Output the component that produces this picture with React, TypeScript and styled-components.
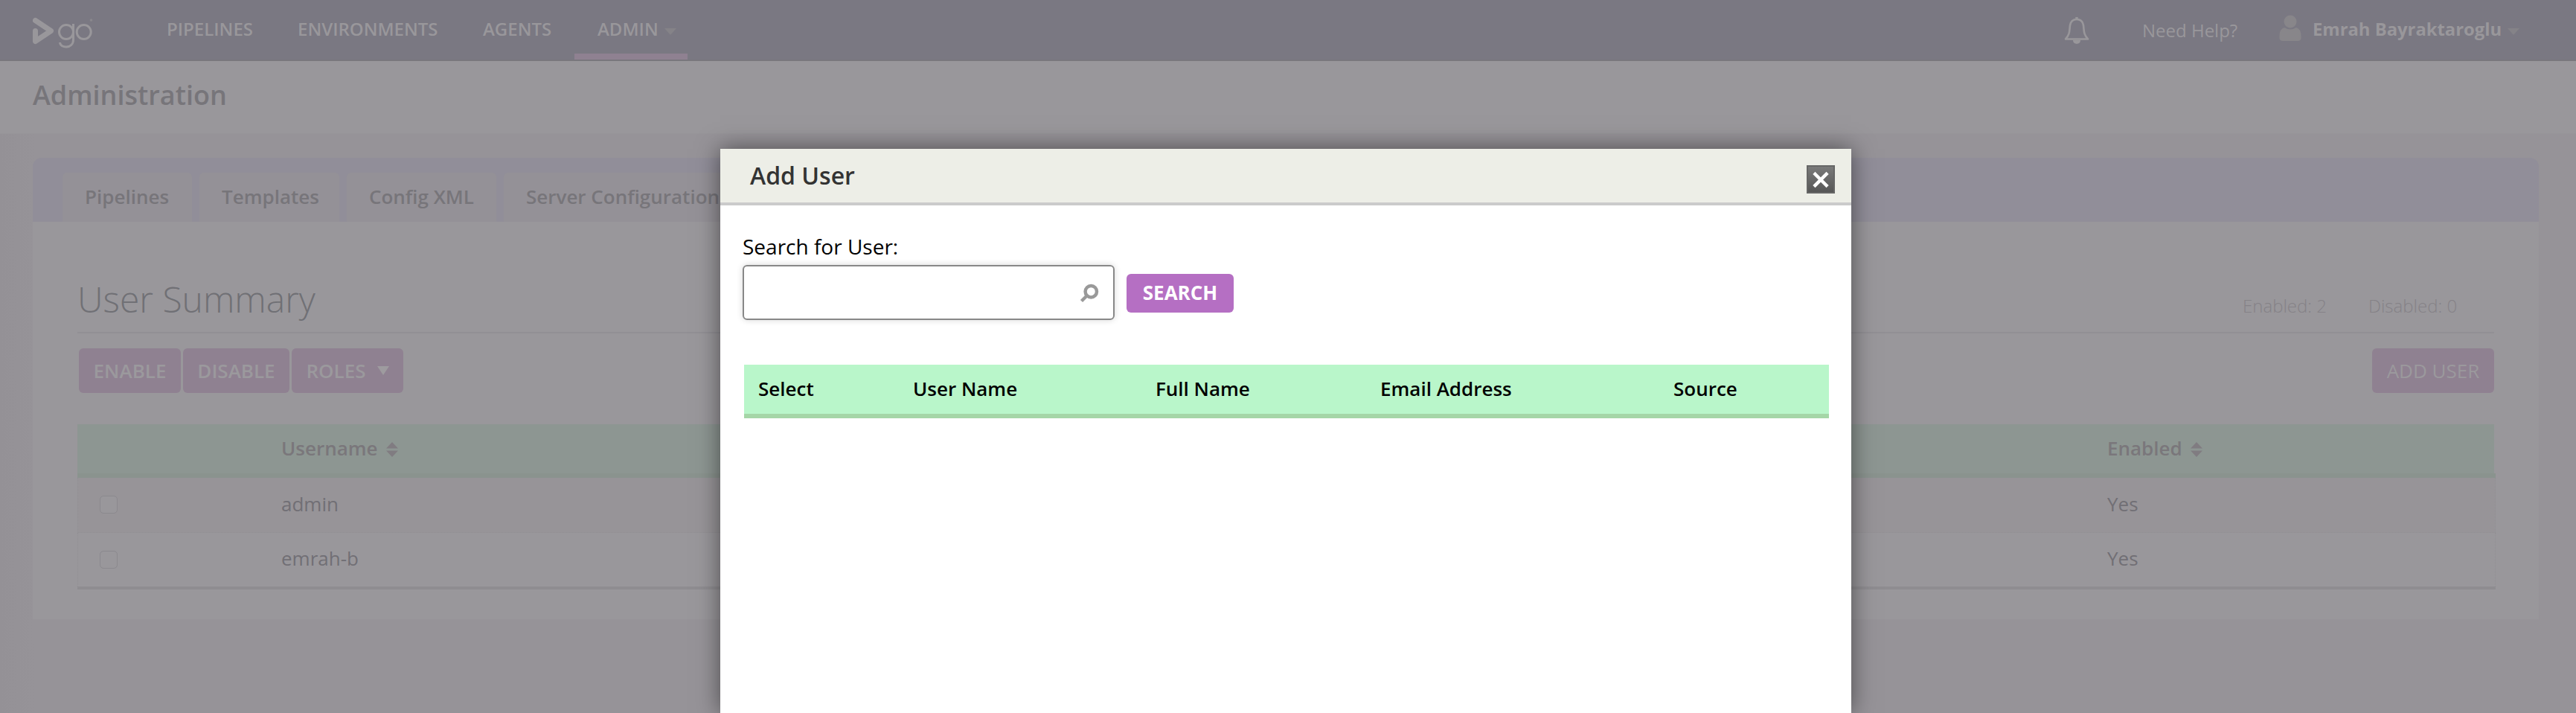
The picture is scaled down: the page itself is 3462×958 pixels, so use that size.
import React from "react";
import styled, { createGlobalStyle } from "styled-components";

const Global = createGlobalStyle`
  * { box-sizing: border-box; }
  body { margin: 0; height: 958px; overflow: hidden; background: #969398; font-family: "Open Sans", "Noto Sans", sans-serif; color: #716f75; }
`;

const Page = styled.div`height: 958px; overflow: hidden; background: linear-gradient(90deg, #949196 0, #969398 46px);`;
const Header = styled.header`
  height: 82px; display: flex; align-items: flex-start; padding-left: 44px; padding-right: 76px;
  background: #7a7882; border-bottom: 2px solid #79777d; color: #99979b;
`;
const Logo = styled.svg`width: 84px; height: 46px; margin-top: 22px; flex: none;`;
const Nav = styled.nav`display: flex; margin-left: 65px; flex: 1;`;
const NavItem = styled.a<{ $w: number; $active?: boolean }>`
  width: ${p => p.$w}px; height: 80px; padding-left: 31px; display: flex; white-space: nowrap;
  font-size: 24px; font-weight: 600; line-height: 78px;
  border-bottom: ${p => (p.$active ? "8px solid #8f8191" : "0")};
`;
const Label = styled.span<{ $w: number }>`width: ${p => p.$w}px; flex: none; white-space: nowrap;`;
const Caret = styled.svg`width: 16px; height: 9px; margin-top: 38px; fill: #858388;`;
const Bell = styled.svg`width: 34px; height: 37px; margin-top: 22px; fill: none; stroke: #99979b;`;
const Help = styled.a`margin-left: 71px; font-size: 24px; line-height: 82px; width: 130px; white-space: nowrap;`;
const Person = styled.svg`width: 30px; height: 36px; margin: 20px 0 0 54px; fill: #88868a;`;
const User = styled.a`margin-left: 15px; width: 262px; font-size: 23.8px; font-weight: 700; line-height: 78px; white-space: nowrap;`;

const TitleBar = styled.div`height: 98px; padding-left: 44px; background: #99979b; border-bottom: 1px solid #979599;
  h1 { margin: 0; font-size: 36px; font-weight: 600; line-height: 92px; color: #77757a; }
`;
const Tabs = styled.div`
  height: 86px; margin: 32px 50px 0 44px; padding: 20px 0 0 40px; display: flex; gap: 10px;
  background: #918e99; border-radius: 12px 12px 0 0;
`;
const Tab = styled.a<{ $w: number }>`
  width: ${p => p.$w}px; padding-left: 30px; background: #949197; border-radius: 6px 6px 0 0; height: 66px;
  font-size: 26px; font-weight: 600; line-height: 64px; color: #77757a; white-space: nowrap;
`;
const Panel = styled.main`height: 534px; margin: 0 50px 0 44px; padding: 60px 60px 0; background: #99979b;`;
const Heading = styled.div`
  height: 90px; display: flex; justify-content: space-between; border-bottom: 2px solid #918f94;
  h2 { margin: 0; font-size: 48px; font-weight: 300; line-height: 87px; color: #707075; }
`;
const Counts = styled.div`display: flex; padding-right: 51px; font-size: 24px; font-weight: 300; line-height: 106px; color: #858287; white-space: nowrap;`;
const Actions = styled.div`display: flex; padding: 20px 0 0 2px; gap: 3px; height: 122px; & > :last-child { margin-left: auto; }`;
const Button = styled.button<{ $w: number; $light?: boolean }>`
  width: ${p => p.$w}px; height: 60px; border: 0; border-radius: 6px; background: #8f8191; color: #9b999d; padding: 0;
  display: flex; align-items: center; justify-content: center; gap: 15px;
  font: ${p => (p.$light ? 400 : 600)} 26px "Open Sans", sans-serif; white-space: nowrap;
`;
const Triangle = styled.svg`width: 16px; height: 12px; fill: #9e9b9f;`;
const Grid = styled.div`width: 3250px;`;
const HeadRow = styled.div`
  display: flex; height: 72px; padding-left: 274px;
  background: linear-gradient(#8d9692, #8d9692) 0 0 / 3248px 66px no-repeat, linear-gradient(#8a938e, #8a938e) 0 66px / 100% 6px no-repeat;
  font-size: 26px; font-weight: 600; color: #7a777b;
`;
const Cell = styled.div<{ $w: number }>`width: ${p => p.$w}px; display: flex; align-items: center; gap: 11px; height: 66px; padding-bottom: 2px;`;
const Sort = styled.svg`width: 16px; height: 22px; margin-top: 3px; fill: #807c81;`;
const Row = styled.div<{ $alt?: boolean }>`
  display: flex; height: ${p => (p.$alt ? 74 : 72)}px; padding: 0 0 2px 29px; align-items: center; font-size: 26px; color: #716f75;
  background: ${p => (p.$alt ? "#979498" : "#99979b")};
  border: 1px dotted #918f93; border-width: 0 1px ${p => (p.$alt ? "1px" : "0")};
`;
const Check = styled.span`width: 24px; height: 24px; border: 1px solid #8b898e; border-radius: 5px; background: #99979b; margin-top: 3px;`;
const Foot = styled.div`height: 4px; background: #8f8d91;`;

const Modal = styled.section`
  position: absolute; left: 968px; top: 200px; width: 1520px; height: 758px; background: #fff; color: #000;
  box-shadow: 0 0 30px rgba(0,0,0,.5);
`;
const ModalHead = styled.div`
  height: 76px; padding: 0 22px 0 40px; display: flex; justify-content: space-between; align-items: flex-start;
  background: #edeee7; border-bottom: 4px solid #cbcbcb;
  h3 { margin: 0; font-size: 32px; font-weight: 600; line-height: 72px; color: #333; }
`;
const Close = styled.svg`width: 38px; height: 38px; margin-top: 22px;`;
const ModalBody = styled.div`padding: 37px 30px 0;`;
const FieldLabel = styled.label`display: block; height: 43px; font-size: 28px; line-height: 36px;`;
const SearchRow = styled.div`display: flex; align-items: center; gap: 16px; height: 74px;`;
const Field = styled.div`
  width: 500px; height: 74px; border: 2px solid #888; border-radius: 6px; box-shadow: 0 0 8px rgba(0,0,0,.16);
  display: flex; align-items: center; justify-content: flex-end; padding-right: 18px;
`;
const Magnifier = styled.svg`width: 28px; height: 28px; fill: none; stroke: #999; stroke-width: 4.5;`;
const SearchButton = styled.button`
  width: 144px; height: 52px; margin-top: 2px; border: 0; border-radius: 6px; background: #b56fc3; color: #fff; padding: 0 0 2px;
  font: 700 26px "Open Sans", sans-serif;
`;
const Results = styled.div`
  display: flex; margin: 60px 0 0 2px; width: 1458px; height: 72px; padding-left: 19px;
  background: #b9f6ca; border-bottom: 6px solid #a5d6a7; font-size: 26px; font-weight: 600; line-height: 64px;
`;

const SortIcon = () => <Sort viewBox="0 0 16 22"><path d="M8 1l8 8.500H0zM8 21l8-8.500H0z" /></Sort>;

export default function App() {
  return (
    <>
      <Global />
      <Page>
        <Header>
          <Logo viewBox="0 0 84 46">
            <path d="M3.500 5.500L24.500 19.500L3.500 33.500V19.500" fill="none" stroke="#99979b" strokeWidth="7" strokeLinecap="round" strokeLinejoin="round" />
            <g fill="none" stroke="#99979b" strokeWidth="3">
              <circle cx="45" cy="21" r="9.500" />
              <path d="M54.500 10V31.500C54.500 43.500 37 43.500 36.500 35" />
              <circle cx="68.700" cy="21" r="9.500" />
            </g>
            <circle cx="78.500" cy="5" r="1.800" fill="#8a888d" />
          </Logo>
          <Nav>
            <NavItem $w={176}><Label $w={116}>PIPELINES</Label></NavItem>
            <NavItem $w={249}><Label $w={188}>ENVIRONMENTS</Label></NavItem>
            <NavItem $w={154}><Label $w={93}>AGENTS</Label></NavItem>
            <NavItem $w={152} $active><Label $w={90}>ADMIN</Label><Caret viewBox="0 0 16 9"><path d="M0 0H16L8 9z" /></Caret></NavItem>
          </Nav>
          <Bell viewBox="0 0 34 37">
            <path d="M2 30.500C8 24 7 20 8 12C9 6 13 4 17 4C21 4 25 6 26 12C27 20 26 24 32 30.500Z" strokeWidth="2.600" strokeLinejoin="round" />
            <path d="M17 1V4" strokeWidth="3.500" />
            <path d="M12 32H22C22 38.500 12 38.500 12 32Z" fill="#99979b" stroke="none" />
          </Bell>
          <Help>Need Help?</Help>
          <Person viewBox="0 0 30 36"><circle cx="15" cy="9" r="8.500" /><path d="M7 17Q15 22 23 17Q29.500 19 29.500 28V31Q29.500 35 25 35H5Q.5 35 .5 31V28Q.5 19 7 17Z" /></Person>
          <User>Emrah Bayraktaroglu</User>
          <Caret viewBox="0 0 16 9"><path d="M0 0H16L8 9z" /></Caret>
        </Header>
        <TitleBar><h1>Administration</h1></TitleBar>
        <Tabs>
          <Tab $w={174}>Pipelines</Tab><Tab $w={188}>Templates</Tab><Tab $w={201}>Config XML</Tab><Tab $w={350}>Server Configuration</Tab>
        </Tabs>
        <Panel>
          <Heading><h2>User Summary</h2><Counts><Label $w={169}>Enabled: 2</Label><Label $w={118}>Disabled: 0</Label></Counts></Heading>
          <Actions>
            <Button $w={137}>ENABLE</Button><Button $w={143}>DISABLE</Button>
            <Button $w={150}>ROLES<Triangle viewBox="0 0 16 12"><path d="M0 0H16L8 12z" /></Triangle></Button>
            <Button $w={164} $light>ADD USER</Button>
          </Actions>
          <Grid>
            <HeadRow><Cell $w={2454}>Username<SortIcon /></Cell><Cell $w={400}>Enabled<SortIcon /></Cell></HeadRow>
            {["admin", "emrah-b"].map((name, i) => (
              <Row key={name} $alt={i === 0}>
                <Cell $w={244}><Check /></Cell><Cell $w={2454}>{name}</Cell><Cell $w={200}>Yes</Cell>
              </Row>
            ))}
            <Foot />
          </Grid>
        </Panel>
      </Page>
      <Modal>
        <ModalHead>
          <h3>Add User</h3>
          <Close viewBox="0 0 38 38">
            <defs><linearGradient id="closeFill" x2="0" y2="1"><stop stopColor="#7b7b7b" /><stop offset="1" stopColor="#555" /></linearGradient></defs>
            <rect x="1" y="1" width="36" height="36" fill="url(#closeFill)" stroke="#666" strokeWidth="2" />
            <path d="M11.500 12L26.500 27M26.500 12L11.500 27" stroke="#fff" strokeWidth="4.500" strokeLinecap="square" />
          </Close>
        </ModalHead>
        <ModalBody>
          <FieldLabel>Search for User:</FieldLabel>
          <SearchRow>
            <Field><Magnifier viewBox="0 0 28 28"><circle cx="16.300" cy="12.700" r="7.700" /><path d="M11 18L3.500 25.500" /></Magnifier></Field>
            <SearchButton>SEARCH</SearchButton>
          </SearchRow>
          <Results>
            <Label $w={208}>Select</Label><Label $w={326}>User Name</Label><Label $w={302}>Full Name</Label><Label $w={394}>Email Address</Label><Label $w={100}>Source</Label>
          </Results>
        </ModalBody>
      </Modal>
    </>
  );
}
